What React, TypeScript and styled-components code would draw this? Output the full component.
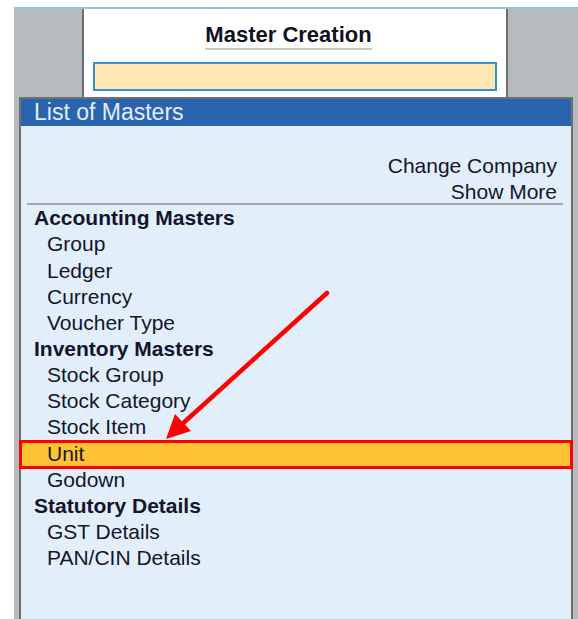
import { FC } from 'react';
import styled, { createGlobalStyle } from 'styled-components';

const GlobalStyle = createGlobalStyle`
    html, body {
        margin: 0;
        padding: 0;
        background: #ffffff;
    }
    body {
        font-family: "Liberation Sans", Arial, sans-serif;
        overflow: hidden;
    }
`;

type TEntry = { label: string; kind: 'section' | 'item'; selected?: boolean };

const ENTRIES: TEntry[] = [
    { label: 'Accounting Masters', kind: 'section' },
    { label: 'Group', kind: 'item' },
    { label: 'Ledger', kind: 'item' },
    { label: 'Currency', kind: 'item' },
    { label: 'Voucher Type', kind: 'item' },
    { label: 'Inventory Masters', kind: 'section' },
    { label: 'Stock Group', kind: 'item' },
    { label: 'Stock Category', kind: 'item' },
    { label: 'Stock Item', kind: 'item' },
    { label: 'Unit', kind: 'item', selected: true },
    { label: 'Godown', kind: 'item' },
    { label: 'Statutory Details', kind: 'section' },
    { label: 'GST Details', kind: 'item' },
    { label: 'PAN/CIN Details', kind: 'item' },
];

const ROW_HEIGHT = 26.15;

const App: FC = () => (
    <Page>
        <GlobalStyle />
        <Frame>
            <TopBand>
                <CreationPanel>
                    <CreationTitle>Master Creation</CreationTitle>
                    <SearchBox />
                </CreationPanel>
            </TopBand>
            <ListPanel>
                <ListHeader>List of Masters</ListHeader>
                <ListBody>
                    <ActionRow>Change Company</ActionRow>
                    <ActionRow>Show More</ActionRow>
                    <Divider />
                    { ENTRIES.map((entry) => entry.kind === 'section'
                        ? <SectionTitle key={entry.label}>{ entry.label }</SectionTitle>
                        : <Item key={entry.label} $selected={!!entry.selected}>{ entry.label }</Item>) }
                </ListBody>
            </ListPanel>
        </Frame>
        <Arrow width="578" height="619" viewBox="0 0 578 619">
            <line x1="327" y1="293" x2="180" y2="426" stroke="#ff0000" strokeWidth="4.5" strokeLinecap="round" />
            <polygon points="166,439 175,414 191,431" fill="#ff0000" />
        </Arrow>
    </Page>
);

export default App;

const Page = styled.div`
    position: relative;
    width: 578px;
    height: 619px;
    overflow: hidden;
    padding-top: 7px;
    box-sizing: border-box;
`;

const Frame = styled.div`
    margin-left: 14px;
    height: 612px;
    border-top: 2px solid #8fc3ea;
    background: #b7babd;
    display: flex;
    flex-direction: column;
`;

const TopBand = styled.div`
    height: 88px;
    padding-left: 68px;
    display: flex;
`;

const CreationPanel = styled.div`
    width: 422px;
    background: #ffffff;
    border-left: 2px solid #6e6f70;
    border-right: 2px solid #6e6f70;
    display: flex;
    flex-direction: column;
    align-items: center;
`;

const CreationTitle = styled.div`
    margin-top: 14px;
    margin-right: 13px;
    font-size: 22px;
    font-weight: bold;
    color: #111122;
    line-height: 24px;
    padding-bottom: 1px;
    border-bottom: 2px solid #c9c9c9;
`;

const SearchBox = styled.div`
    margin-top: 12px;
    width: 404px;
    height: 29px;
    box-sizing: border-box;
    background: #fde7b3;
    border: 2px solid #2f93cc;
`;

const ListPanel = styled.div`
    margin-left: 5px;
    width: 554px;
    flex: 1;
    box-sizing: border-box;
    border: 2px solid #6f7071;
    border-bottom: none;
    display: flex;
    flex-direction: column;
`;

const ListHeader = styled.div`
    height: 27px;
    background: #2a64ae;
    color: #e4eefc;
    font-size: 23px;
    line-height: 27px;
    padding-left: 13px;
`;

const ListBody = styled.div`
    flex: 1;
    background: #e2effb;
    padding-top: 27px;
    display: flex;
    flex-direction: column;
`;

const Row = styled.div`
    height: ${ROW_HEIGHT}px;
    line-height: ${ROW_HEIGHT}px;
    font-size: 21px;
    color: #14142c;
    white-space: nowrap;
`;

const ActionRow = styled(Row)`
    text-align: right;
    padding-right: 14px;
`;

const Divider = styled.div`
    height: 0;
    margin: -2px 8px 0 6px;
    border-top: 2px solid #a3a6aa;
`;

const SectionTitle = styled(Row)`
    padding-left: 13px;
    font-weight: bold;
`;

const Item = styled(Row)<{ $selected: boolean }>`
    padding-left: 26px;
    ${({ $selected }) => $selected && `
        height: 29px;
        line-height: 21px;
        box-sizing: border-box;
        margin: -1px -2px -1.85px -2px;
        padding-left: 25px;
        background: #fec332;
        border: 3px solid #ff0000;
    `}
`;

const Arrow = styled.svg`
    position: absolute;
    top: 0;
    left: 0;
    pointer-events: none;
`;
